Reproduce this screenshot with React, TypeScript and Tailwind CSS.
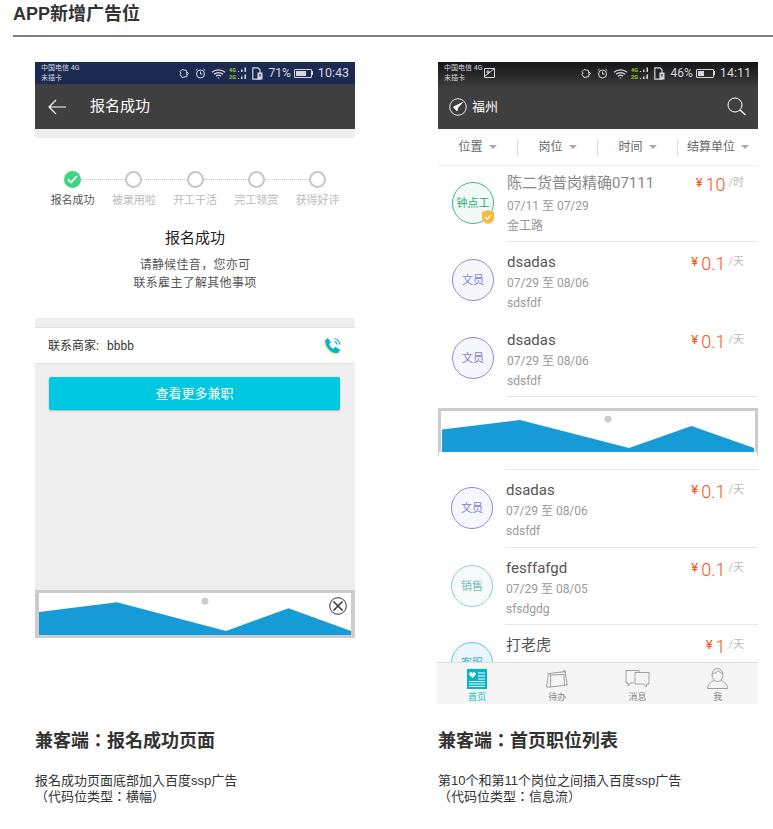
const sans = "font-['Roboto','Noto_Sans_CJK_SC',sans-serif]";

function StatusIcons({ percent, time, level }: { percent: string; time: string; level: number }) {
  return (
    <div className="flex items-center text-[#d5d8df]">
      <svg width="10" height="11" viewBox="0 0 10 11" fill="none" stroke="currentColor" strokeWidth="1">
        <path d="M3 1.500 7.500 2.500 8 8.500 3 9.500 2 8 1 6.500 2 5 1 3.500ZM8 4l1.500 1.500L8 7" />
      </svg>
      <svg className="ml-[6px]" width="11" height="11" viewBox="0 0 11 11" fill="none" stroke="currentColor" strokeWidth="1">
        <circle cx="5.500" cy="6" r="4" />
        <path d="M5.500 3.500V6H7.500M.8 2.500 2.500 1M10.200 2.500 8.500 1" />
      </svg>
      <svg className="ml-[5px]" width="15" height="11" viewBox="0 0 15 11" fill="none" stroke="currentColor" strokeWidth="1.200">
        <path d="M1 4.200C4.500 1 10.500 1 14 4.200M3 6.200C5.500 4 9.500 4 12 6.200M5 8.200C6.500 7 8.500 7 10 8.200M6.800 10H8.200" />
      </svg>
      <svg className="ml-[3px]" width="18" height="15" viewBox="0 0 18 15">
        <text x="0" y="6" fontSize="5.500" fontWeight="700" fill="#8fd11f">4G</text>
        <text x="0" y="13" fontSize="5.500" fontWeight="700" fill="#8fd11f">2G</text>
        <path d="M9 5h1v1H9zM12 3.500h1.500V6H12zM15.500 1.500H17V6h-1.500zM9 12h1v1H9zM12 10.500h1.500V13H12zM15.500 8.500H17V13h-1.500z" fill="currentColor" />
      </svg>
      <svg className="ml-[5px]" width="11" height="13" viewBox="0 0 11 13" fill="none" stroke="currentColor" strokeWidth="1.200">
        <path d="M.8.800H6L8 2.800V12.200H.8Z" />
        <rect x="5.500" y="5.500" width="5" height="7" fill="currentColor" stroke="none" />
        <path d="M8 7v2.500" stroke="#1c2a52" />
      </svg>
      <span className="ml-[6px] font-['Roboto'] text-[12px] leading-none">{percent}</span>
      <span className="ml-[3px] flex h-[9px] w-[18px] items-center rounded-[1px] border border-current p-px">
        <span className="block h-full bg-[#d5d8df]" style={{ width: `${level}%` }} />
      </span>
      <span className="h-[4px] w-px bg-current" />
      <span className="ml-[5px] font-['Roboto'] text-[12.5px] leading-none">{time}</span>
    </div>
  );
}

function AdGraphic() {
  return (
    <svg className="block h-full w-full" viewBox="0 0 312 41" preserveAspectRatio="none">
      <path d="M0 18.500 78 9 187 37 249.500 15 312 37V41H0Z" fill="#179bd7" />
      <circle cx="166" cy="8" r="3.500" fill="#cccccc" />
    </svg>
  );
}

function Step({ active }: { active?: boolean }) {
  if (active) {
    return (
      <span className="flex h-[17px] w-[17px] shrink-0 items-center justify-center rounded-full bg-[#3ed67f]">
        <svg width="11" height="9" viewBox="0 0 11 9" fill="none" stroke="#fff" strokeWidth="1.800">
          <path d="M1 4.500 4 7.500 10 1" />
        </svg>
      </span>
    );
  }
  return <span className="h-[17px] w-[17px] shrink-0 rounded-full border-2 border-[#c6c6c6]" />;
}

function SignupPhone() {
  const labels = ["报名成功", "被录用啦", "开工干活", "完工领赏", "获得好评"];
  return (
    <div className={`w-[320px] self-start bg-white ${sans}`}>
      <div className="flex h-[22px] items-center justify-between bg-[#1c2a52] pl-[6px] pr-[6px]">
        <div className="text-[7px] leading-[10px] text-[#d5d8df]">
          <div>中国电信 4G</div>
          <div>未插卡</div>
        </div>
        <StatusIcons percent="71%" time="10:43" level={75} />
      </div>
      <div className="flex h-[45px] items-center bg-[#3f3f3f] pl-[13px] text-white">
        <svg width="18" height="16" viewBox="0 0 18 16" fill="none" stroke="#fff" strokeWidth="1.200">
          <path d="M18 8H1M8 1 1 8l7 7" />
        </svg>
        <span className="ml-[24px] text-[15px]">报名成功</span>
      </div>
      <div className="h-[9px] bg-[#efefef]" />
      <div className="h-[180px] pt-[33px]">
        <div className="flex items-center pl-[29px]">
          <Step active />
          {labels.slice(1).map((label) => (
            <div key={label} className="flex items-center">
              <span className="w-[44.25px] border-t border-dotted border-[#c8c8c8]" />
              <Step />
            </div>
          ))}
        </div>
        <div className="mt-[5px] grid grid-cols-[repeat(5,61.25px)] pl-[7px] text-center text-[11px] leading-[16px] text-[#bbbbbb]">
          {labels.map((label, i) => (
            <span key={label} className={i === 0 ? "text-[#555555]" : ""}>
              {label}
            </span>
          ))}
        </div>
        <h3 className="mt-[18px] text-center text-[15px] leading-[22px] text-[#222222]">报名成功</h3>
        <p className="mt-[7px] text-center text-[12px] leading-[18px] tracking-[0.3px] text-[#555555]">
          请静候佳音，您亦可
          <br />
          联系雇主了解其他事项
        </p>
      </div>
      <div className="h-[9px] bg-[#efefef]" />
      <div className="flex h-[37px] items-center justify-between border-y border-[#e2e2e2] pl-[13px] pr-[13px] text-[12px] text-[#333333]">
        <span className="mt-px">
          联系商家:<span className="ml-[8px]">bbbb</span>
        </span>
        <svg width="18" height="18" viewBox="0 0 18 18" fill="none">
          <path d="M1 3.500 4 1l3 4.500-2 1.800c1 2 2.500 3.500 4.500 4.500l1.800-2 5 3-2.300 3.500C7 17 1 10 1 3.500Z" fill="#00b8cc" />
          <path d="M1 7c1 5 5 9 10 10" stroke="#e6e23a" strokeWidth="1" />
          <path d="M10 1.500c3 .5 5 2.500 6 6M10 4.500c1.500.3 2.700 1.300 3.300 3" stroke="#00b8cc" strokeWidth="1.200" />
        </svg>
      </div>
      <div className="h-[226px] bg-[#efefef] pl-[14px] pr-[15px] pt-[13px]">
        <button className="h-[33px] w-full rounded-[2px] bg-[#00c8e0] pt-px text-[13px] text-white shadow-[0_1px_2px_rgba(0,0,0,0.25)]">
          查看更多兼职
        </button>
      </div>
      <div className="relative h-[48px] border-x-[4px] border-y-[3px] border-[#cccccc] bg-white">
        <AdGraphic />
        <svg className="absolute right-[4px] top-[4px]" width="18" height="18" viewBox="0 0 18 18" fill="none" stroke="#333" strokeWidth="1">
          <circle cx="9" cy="9" r="8.300" />
          <path d="m4.500 4.500 9 9M13.500 4.500l-9 9" strokeWidth="1.500" />
        </svg>
      </div>
    </div>
  );
}

type Job = {
  title: string;
  date: string;
  place: string;
  tag: string;
  tone: string;
  pay: string;
  unit: string;
  muted?: boolean;
  badge?: boolean;
  row: string;
  dateGap: string;
};

function JobRow({ job }: { job: Job }) {
  return (
    <div className={`flex shrink-0 pl-[14px] pr-[14px] ${job.row}`}>
      <div className={`relative flex h-[42px] w-[42px] shrink-0 items-center justify-center rounded-full border pt-[3px] text-[11px] ${job.badge ? "mt-[9px]" : "mt-[7px]"} ${job.tone}`}>
        {job.tag}
        {job.badge && (
          <svg className="absolute -bottom-px -right-px" width="12" height="14" viewBox="0 0 12 14">
            <path d="M6 0 12 2V8C12 11 9 13 6 14 3 13 0 11 0 8V2Z" fill="#f7bb3a" />
            <path d="M3 7l2.200 2.200L9 5" stroke="#fff" strokeWidth="1.300" fill="none" />
          </svg>
        )}
      </div>
      <div className="ml-[13px] min-w-0 flex-1">
        <div className={`text-[15px] leading-[20px] ${job.muted ? "text-[#888888]" : "text-[#555555]"}`}>{job.title}</div>
        <div className={`text-[12px] leading-[19px] text-[#999999] ${job.dateGap}`}>{job.date}</div>
        <div className="text-[12px] leading-[20px] text-[#999999]">{job.place}</div>
      </div>
      <div className="flex h-[24px] items-start">
        <span className="mt-[2px] text-[13px] leading-[16px] text-[#ff4f14]">¥</span>
        <span className="ml-[3px] text-[18px] font-light leading-[24px] text-[#ff4f14]">{job.pay}</span>
        <span className="ml-[3px] mt-[2px] text-[11px] leading-[16px] text-[#bbbbbb]">/{job.unit}</span>
      </div>
    </div>
  );
}

const clerk = "border-[#8a8ddb] bg-[#f6f7fd] text-[#7a7ed0]";

const upperJobs: Job[] = [
  { title: "陈二货普岗精确07111", date: "07/11 至 07/29", place: "金工路", tag: "钟点工", tone: "border-[#3bbd8a] bg-[#f1faf6] text-[#2aa877]", pay: "10", unit: "时", muted: true, badge: true, row: "h-[75px] pt-[7px]", dateGap: "mt-[4px]" },
  { title: "dsadas", date: "07/29 至 08/06", place: "sdsfdf", tag: "文员", tone: clerk, pay: "0.1", unit: "天", row: "h-[77px] pt-[10px]", dateGap: "mt-[2px]" },
  { title: "dsadas", date: "07/29 至 08/06", place: "sdsfdf", tag: "文员", tone: clerk, pay: "0.1", unit: "天", row: "h-[77px] pt-[11px]", dateGap: "mt-[2px]" },
];

const lowerJobs: Job[] = [
  { title: "dsadas", date: "07/29 至 08/06", place: "sdsfdf", tag: "文员", tone: clerk, pay: "0.1", unit: "天", row: "h-[77px] pt-[10px]", dateGap: "mt-[2px]" },
  { title: "fesffafgd", date: "07/29 至 08/05", place: "sfsdgdg", tag: "销售", tone: "border-[#8fd0cf] bg-[#f5fbfb] text-[#6fbcb8]", pay: "0.1", unit: "天", row: "h-[76px] pt-[10px]", dateGap: "mt-[2px]" },
  { title: "打老虎", date: "07/29 至 08/05", place: "sfsdgdg", tag: "客服", tone: "border-[#5cc5e6] bg-[#e9f7fc] text-[#45a9c9]", pay: "1", unit: "天", row: "h-[77px] pt-[10px]", dateGap: "mt-[5px]" },
];

const Separator = () => <div className="ml-[68px] h-px shrink-0 bg-[#e6e6e6]" />;

function TabIcon({ name }: { name: string }) {
  if (name === "首页") {
    return (
      <svg width="20" height="20" viewBox="0 0 20 20">
        <rect width="20" height="20" fill="#00b7c9" />
        <path d="M5.500 9 2.500 6C1.500 4.500 2.800 3 4 3.300c.7.100 1.200.5 1.500 1 .3-.5.800-.9 1.500-1C8.200 3 9.500 4.500 8.500 6Z" fill="#fff" />
        <path d="M11 4h7M11 7h7M11 10h7M2 12.500h16M2 15h16M2 17.500h16" stroke="#fff" strokeWidth="1.100" />
      </svg>
    );
  }
  if (name === "待办") {
    return (
      <svg width="22" height="18" viewBox="0 0 22 18" fill="none" stroke="#8a8a8a" strokeWidth="0.800">
        <path d="M2.500 3.500 4.700 5 4.500 17H.5Z" />
        <path d="M2.500 3.500 19 1.700 21.300 15 4.500 17" />
        <path d="M17 2c0-1.200 1.500-2 2.300-1.200.6.600.3 1.800-.5 2.200" />
        <path d="M4.700 5 18 4.500 18.500 15.300" />
      </svg>
    );
  }
  if (name === "消息") {
    return (
      <svg width="25" height="20" viewBox="0 0 25 20" fill="none" stroke="#8a8a8a" strokeWidth="0.800">
        <path d="M9 14H5l-2 3v-3H1V1.500h13V3" />
        <path d="M10 3.500h14V15h-2.500v3l-3-3H10Z" />
      </svg>
    );
  }
  return (
    <svg width="21" height="21" viewBox="0 0 21 21" fill="none" stroke="#8a8a8a" strokeWidth="0.800">
      <ellipse cx="10.500" cy="7" rx="5.500" ry="6.500" />
      <path d="M5.500 5.500C8 5.500 10 4 11.500 2.500c.8 1.500 2.200 2.700 4 3M7 12.500C4 14 1 15 .5 20.500h20C20 15 17 14 14 12.500" />
    </svg>
  );
}

function FeedPhone() {
  return (
    <div className={`flex h-[642px] w-[320px] flex-col bg-white ${sans}`}>
      <div className="h-[67px] shrink-0 bg-gradient-to-b from-[#151515] via-[#3f3f3f] via-40% to-[#3f3f3f]">
        <div className="flex h-[22px] items-center justify-between pl-[6px] pr-[7px]">
          <div className="flex items-center text-[7px] leading-[10px] text-[#d5d8df]">
            <div>
              <div>中国电信 4G</div>
              <div>未插卡</div>
            </div>
            <svg className="ml-[2px]" width="11" height="10" viewBox="0 0 11 10" fill="none" stroke="#d5d8df" strokeWidth="1">
              <path d="M.5.500h10v9H.5ZM1 8l9-7M3 3h2v2H3Z" />
            </svg>
          </div>
          <StatusIcons percent="46%" time="14:11" level={45} />
        </div>
        <div className="flex h-[45px] items-center justify-between pl-[11px] pr-[12px] text-white">
          <div className="flex items-center">
            <svg width="18" height="18" viewBox="0 0 18 18" fill="none" stroke="#fff" strokeWidth="0.900">
              <circle cx="9" cy="9" r="8.300" />
              <path d="M13.500 4.500 8.500 10 8 13 4.500 9Z" fill="#fff" />
            </svg>
            <span className="ml-[5px] text-[13px]">福州</span>
          </div>
          <svg width="19" height="19" viewBox="0 0 19 19" fill="none" stroke="#fff" strokeWidth="1">
            <circle cx="8" cy="8" r="7" />
            <path d="m13 13 5.500 5" strokeWidth="1.300" />
          </svg>
        </div>
      </div>
      <div className="grid h-[37px] shrink-0 grid-cols-4 items-center border-b border-[#eeeeee] text-[12px] text-[#666666]">
        {["位置", "岗位", "时间", "结算单位"].map((label, i) => (
          <div key={label} className={`flex h-[18px] items-center justify-center ${i < 3 ? "border-r border-[#dddddd]" : ""}`}>
            {label}
            <span className="ml-[6px] h-0 w-0 border-x-[4px] border-t-[4px] border-x-transparent border-t-[#aaaaaa]" />
          </div>
        ))}
      </div>
      {upperJobs.map((job, i) => (
        <div key={i} className="shrink-0">
          <JobRow job={job} />
          {i !== 1 && <Separator />}
        </div>
      ))}
      <div className="mt-[11px] h-[48px] shrink-0">
        <div className="h-[44px] border-x-[3px] border-t-[3px] border-[#cccccc] bg-white pl-px pr-px">
          <AdGraphic />
        </div>
        <div className="h-[4px] border-x border-[#cccccc]" />
      </div>
      <div className="-ml-px mt-[13px] flex min-h-0 flex-1 flex-col">
        <div className="min-h-0 flex-1 overflow-hidden">
          <div className="ml-[68px] h-px bg-[#e6e6e6]" />
          {lowerJobs.map((job, i) => (
            <div key={i}>
              <JobRow job={job} />
              {i < 2 && <Separator />}
            </div>
          ))}
        </div>
        <div className="grid h-[42px] shrink-0 grid-cols-4 border-t border-[#dddddd] bg-[#f5f5f5] pt-[5px]">
          {["首页", "待办", "消息", "我"].map((name, i) => (
            <div key={name} className={`flex flex-col items-center text-[9px] leading-[12px] ${i === 0 ? "text-[#00b7c9]" : "text-[#888888]"}`}>
              <span className="flex h-[21px] items-center">
                <TabIcon name={name} />
              </span>
              <span className="mt-[2px]">{name}</span>
            </div>
          ))}
        </div>
      </div>
    </div>
  );
}

function Caption({ title, lines }: { title: string; lines: string[] }) {
  return (
    <div className="pt-[25px] font-['Liberation_Sans','Noto_Sans_CJK_TC',sans-serif] text-[#333333]">
      <h2 className="text-[18px] font-bold leading-[24px]">{title}</h2>
      <p className="mt-[20px] text-[13px] leading-[16px]">
        {lines[0]}
        <br />
        {lines[1]}
      </p>
    </div>
  );
}

export default function App() {
  return (
    <div className="min-h-[829px] w-[773px] overflow-hidden bg-white font-['Liberation_Sans','Noto_Sans_CJK_SC',sans-serif] text-[#333333]">
      <div className="ml-[13px] h-[37px] border-b-2 border-[#808080]">
        <h1 className="text-[18px] font-bold leading-[29px]">APP新增广告位</h1>
      </div>
      <div className="mt-[25px] grid grid-cols-[320px_320px] gap-x-[83px] pl-[35px]">
        <SignupPhone />
        <FeedPhone />
        <Caption title="兼客端：报名成功页面" lines={["报名成功页面底部加入百度ssp广告", "（代码位类型：横幅）"]} />
        <Caption title="兼客端：首页职位列表" lines={["第10个和第11个岗位之间插入百度ssp广告", "（代码位类型：信息流）"]} />
      </div>
    </div>
  );
}
